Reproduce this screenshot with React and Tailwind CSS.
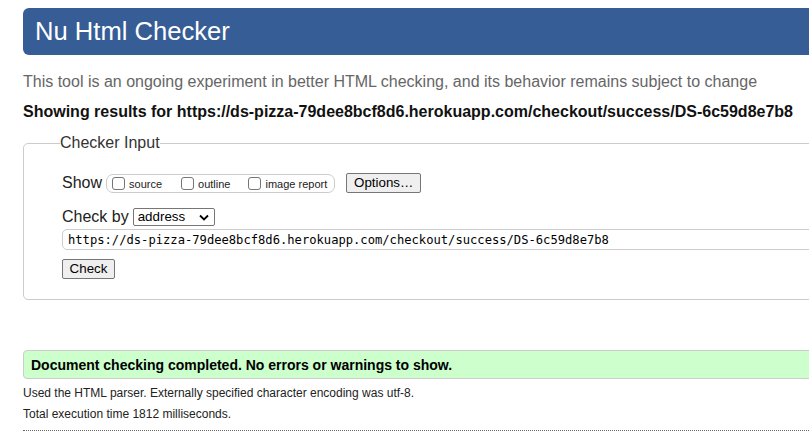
import React from "react";

function Box({ label, mr }) {
  return (
    <label className={"flex items-end " + mr}>
      <span className="inline-block w-[13px] h-[13px] border border-[#767676] rounded-[3px] bg-white mb-[1px]" />
      <span className="ml-[4px] text-[11px] leading-[13px] text-[#222]">{label}</span>
    </label>
  );
}

export default function App() {
  return (
    <div
      className="w-[809px] h-[435px] overflow-hidden bg-white text-[#222]"
      style={{ fontFamily: '"Liberation Sans", Arial, sans-serif' }}
    >
      <div className="ml-[23px] w-[840px] pt-[8px]">
        <div className="h-[47px] rounded-[6px] bg-[#365d95] flex items-center pl-[12px]">
          <h1 className="text-[25.6px] leading-none text-white font-normal">Nu Html Checker</h1>
        </div>
        <p className="mt-[18px] text-[16px] leading-[18px] text-[#666]">
          This tool is an ongoing experiment in better HTML checking, and its behavior remains subject to change
        </p>
        <p className="mt-[12px] text-[16px] leading-[18px] font-bold text-[#111]">
          Showing results for https://ds-pizza-79dee8bcf8d6.herokuapp.com/checkout/success/DS-6c59d8e7b8
        </p>
        <fieldset className="mt-[13px] border border-[#ccc] rounded-[5px] pl-[38px] pt-[21px] pb-[19px]">
          <legend className="ml-[-2px] text-[16px] leading-[18px] text-[#333] px-0">Checker Input</legend>
          <div className="flex items-center h-[20px]">
            <span className="text-[16px] leading-[18px] text-[#222]">Show</span>
            <div className="ml-[4px] h-[19px] w-[229px] border border-[#ccc] rounded-[7px] flex items-end pl-[5px] pb-[1px]">
              <Box label="source" mr="mr-[19px]" />
              <Box label="outline" mr="mr-[18px]" />
              <Box label="image report" mr="" />
            </div>
            <button className="ml-[11px] h-[20px] px-[7px] border border-[#767676] rounded-[2px] bg-[#efefef] text-[13.33px] leading-[16px] text-black">
              Options…
            </button>
          </div>
          <div className="mt-[15px] flex items-center h-[18px]">
            <span className="text-[16px] leading-[18px] text-[#222]">Check by</span>
            <div className="ml-[4px] h-[18px] w-[82px] border border-[#767676] rounded-[2px] bg-white flex items-center justify-between pl-[4px] pr-[4px]">
              <span className="text-[13.33px] leading-[16px] text-black">address</span>
              <svg width="10" height="7" viewBox="0 0 10 7" className="mr-[1px]">
                <path d="M1 1.5 L5 5.5 L9 1.5" fill="none" stroke="#000" strokeWidth="1.8" />
              </svg>
            </div>
          </div>
          <div className="mt-[3px] h-[21px] border border-[#ccc] rounded-[5px] flex items-center pl-[5px]">
            <span
              className="text-[12.15px] leading-[14px] text-black"
              style={{ fontFamily: '"DejaVu Sans Mono", monospace' }}
            >
              https://ds-pizza-79dee8bcf8d6.herokuapp.com/checkout/success/DS-6c59d8e7b8
            </span>
          </div>
          <button className="mt-[9px] h-[20px] w-[53px] border border-[#767676] rounded-[2px] bg-[#efefef] text-[13.33px] leading-[16px] text-black">
            Check
          </button>
        </fieldset>
        <div className="mt-[50px] h-[29px] border border-[#ccc] rounded-[4px] bg-[#ccffcc] flex items-center pl-[7px]">
          <span className="text-[14px] leading-[16px] font-bold text-black">
            Document checking completed. No errors or warnings to show.
          </span>
        </div>
        <p className="mt-[7px] text-[12px] leading-[14px] text-[#222]">
          Used the HTML parser. Externally specified character encoding was utf-8.
        </p>
        <p className="mt-[7px] text-[12px] leading-[14px] text-[#222]">
          Total execution time 1812 milliseconds.
        </p>
        <div className="mt-[9px] border-t border-dotted border-[#666]" />
      </div>
    </div>
  );
}
